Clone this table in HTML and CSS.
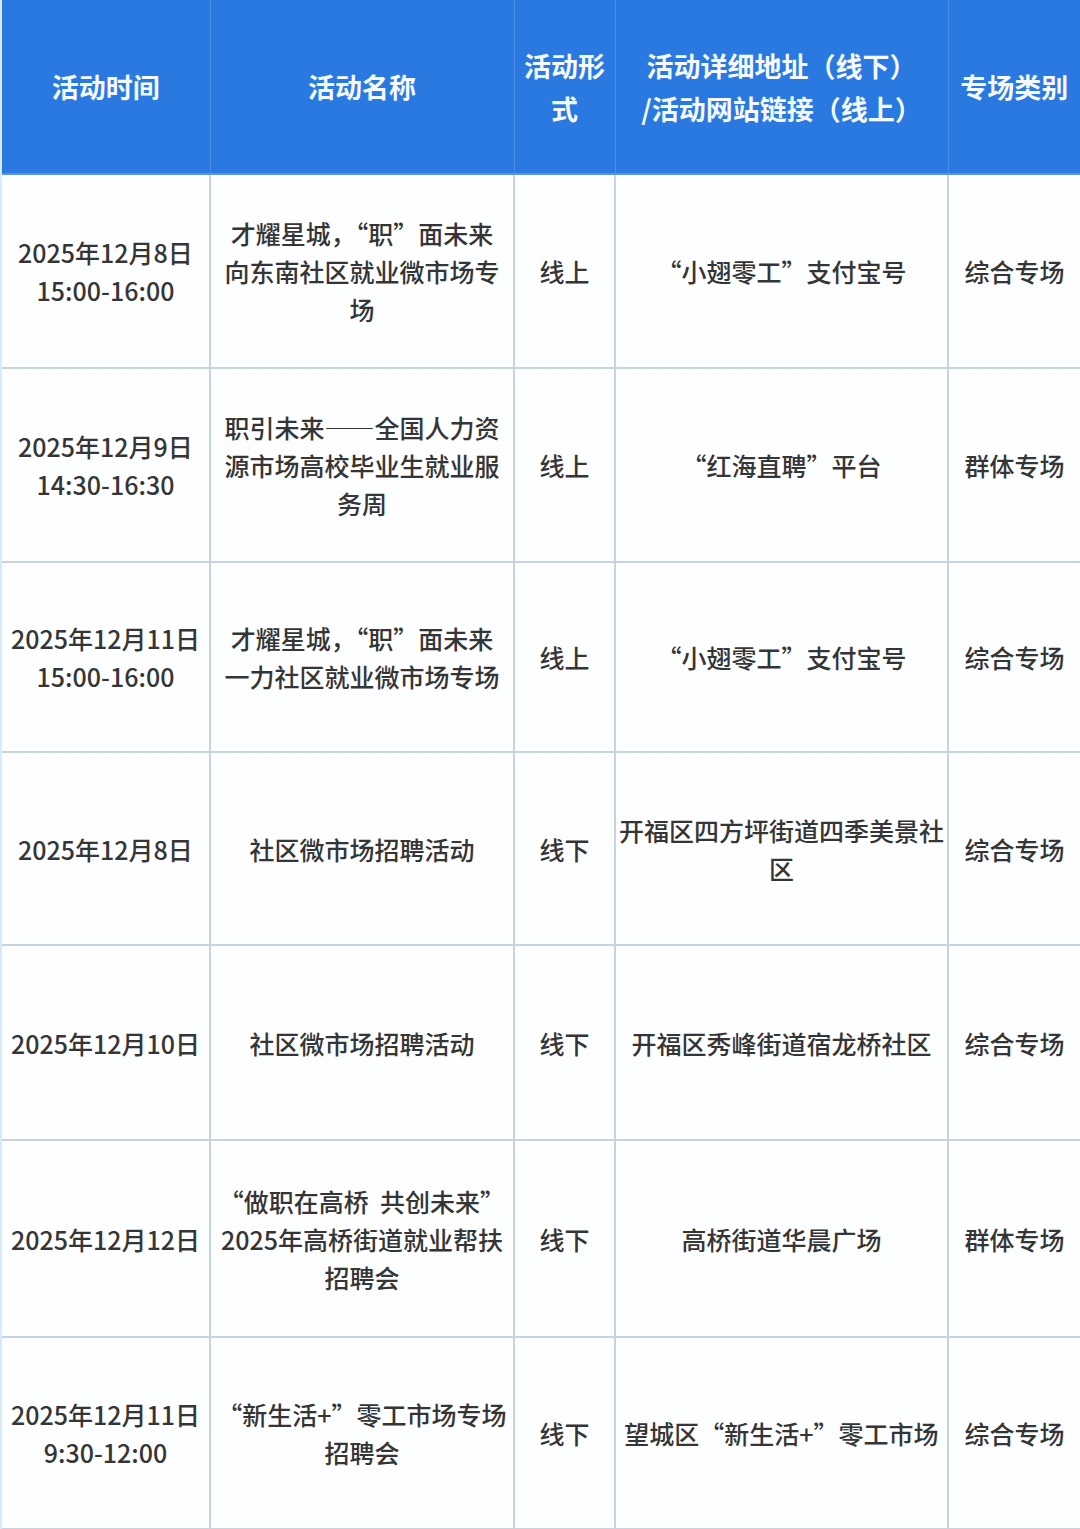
FILE: index.html
```html
<!DOCTYPE html>
<html lang="zh-CN">
<head>
<meta charset="utf-8">
<title>活动安排</title>
<link rel="stylesheet" href="styles.css">
</head>
<body>
<div class="page">
<table class="sched">
  <colgroup>
    <col class="c1"><col class="c2"><col class="c3"><col class="c4"><col class="c5">
  </colgroup>
  <thead>
    <tr class="hrow">
      <th>活动时间</th>
      <th>活动名称</th>
      <th>活动形<br>式</th>
      <th>活动详细地址（线下）<br>/活动网站链接（线上）</th>
      <th>专场类别</th>
    </tr>
  </thead>
  <tbody>
    <tr class="r1">
      <td>2025年12月8日<br>15:00-16:00</td>
      <td>才耀星城，“职”面未来<br>向东南社区就业微市场专<br>场</td>
      <td>线上</td>
      <td>“小翅零工”支付宝号</td>
      <td>综合专场</td>
    </tr>
    <tr class="r2">
      <td>2025年12月9日<br>14:30-16:30</td>
      <td>职引未来——全国人力资<br>源市场高校毕业生就业服<br>务周</td>
      <td>线上</td>
      <td>“红海直聘”平台</td>
      <td>群体专场</td>
    </tr>
    <tr class="r3">
      <td>2025年12月11日<br>15:00-16:00</td>
      <td>才耀星城，“职”面未来<br>一力社区就业微市场专场</td>
      <td>线上</td>
      <td>“小翅零工”支付宝号</td>
      <td>综合专场</td>
    </tr>
    <tr class="r4">
      <td>2025年12月8日</td>
      <td>社区微市场招聘活动</td>
      <td>线下</td>
      <td>开福区四方坪街道四季美景社<br>区</td>
      <td>综合专场</td>
    </tr>
    <tr class="r5">
      <td>2025年12月10日</td>
      <td>社区微市场招聘活动</td>
      <td>线下</td>
      <td>开福区秀峰街道宿龙桥社区</td>
      <td>综合专场</td>
    </tr>
    <tr class="r6">
      <td>2025年12月12日</td>
      <td>“做职在高桥&nbsp;&nbsp;共创未来”<br>2025年高桥街道就业帮扶<br>招聘会</td>
      <td>线下</td>
      <td>高桥街道华晨广场</td>
      <td>群体专场</td>
    </tr>
    <tr class="r7">
      <td>2025年12月11日<br>9:30-12:00</td>
      <td>“新生活+”零工市场专场<br>招聘会</td>
      <td>线下</td>
      <td>望城区“新生活+”零工市场</td>
      <td>综合专场</td>
    </tr>
  </tbody>
</table>
</div>
</body>
</html>
```

FILE: styles.css
```css
html, body {
  margin: 0;
  padding: 0;
  background: #ffffff;
}
.page {
  width: 1080px;
  height: 1529px;
  overflow: hidden;
  padding-left: 2px;
  box-sizing: border-box;
  background: #d5eafa;
}
.sched {
  width: 1078px;
  table-layout: fixed;
  border-collapse: collapse;
  font-family: "Noto Sans CJK SC", "Noto Sans", sans-serif;
  background: #fdfeff;
}
.c1 { width: 208px; }
.c2 { width: 304px; }
.c3 { width: 101px; }
.c4 { width: 333px; }
.c5 { width: 132px; }

.sched th {
  background: #2a79e0;
  color: #f4f8ff;
  font-size: 27px;
  font-weight: 700;
  line-height: 43px;
  text-align: center;
  vertical-align: middle;
  padding: 0;
  border-left: 1px solid #4b8de6;
  border-bottom: 2px solid #5b95d8;
}
.sched th:first-child { border-left: none; }
.hrow { height: 174px; }

.sched td {
  color: #353535;
  font-size: 25px;
  font-weight: 500;
  line-height: 38px;
  text-align: center;
  vertical-align: middle;
  padding: 0;
  border: 2px solid #c6d4e1;
  white-space: nowrap;
}
.sched td:first-child { border-left: none; }
.sched td:last-child { border-right: none; }
.sched tbody tr:first-child td { border-top: none; }

.r1 { height: 194px; }
.r2 { height: 194px; }
.r3 { height: 190px; }
.r4 { height: 193px; }
.r5 { height: 195px; }
.r6 { height: 197px; }
.r7 { height: 192px; }
```
